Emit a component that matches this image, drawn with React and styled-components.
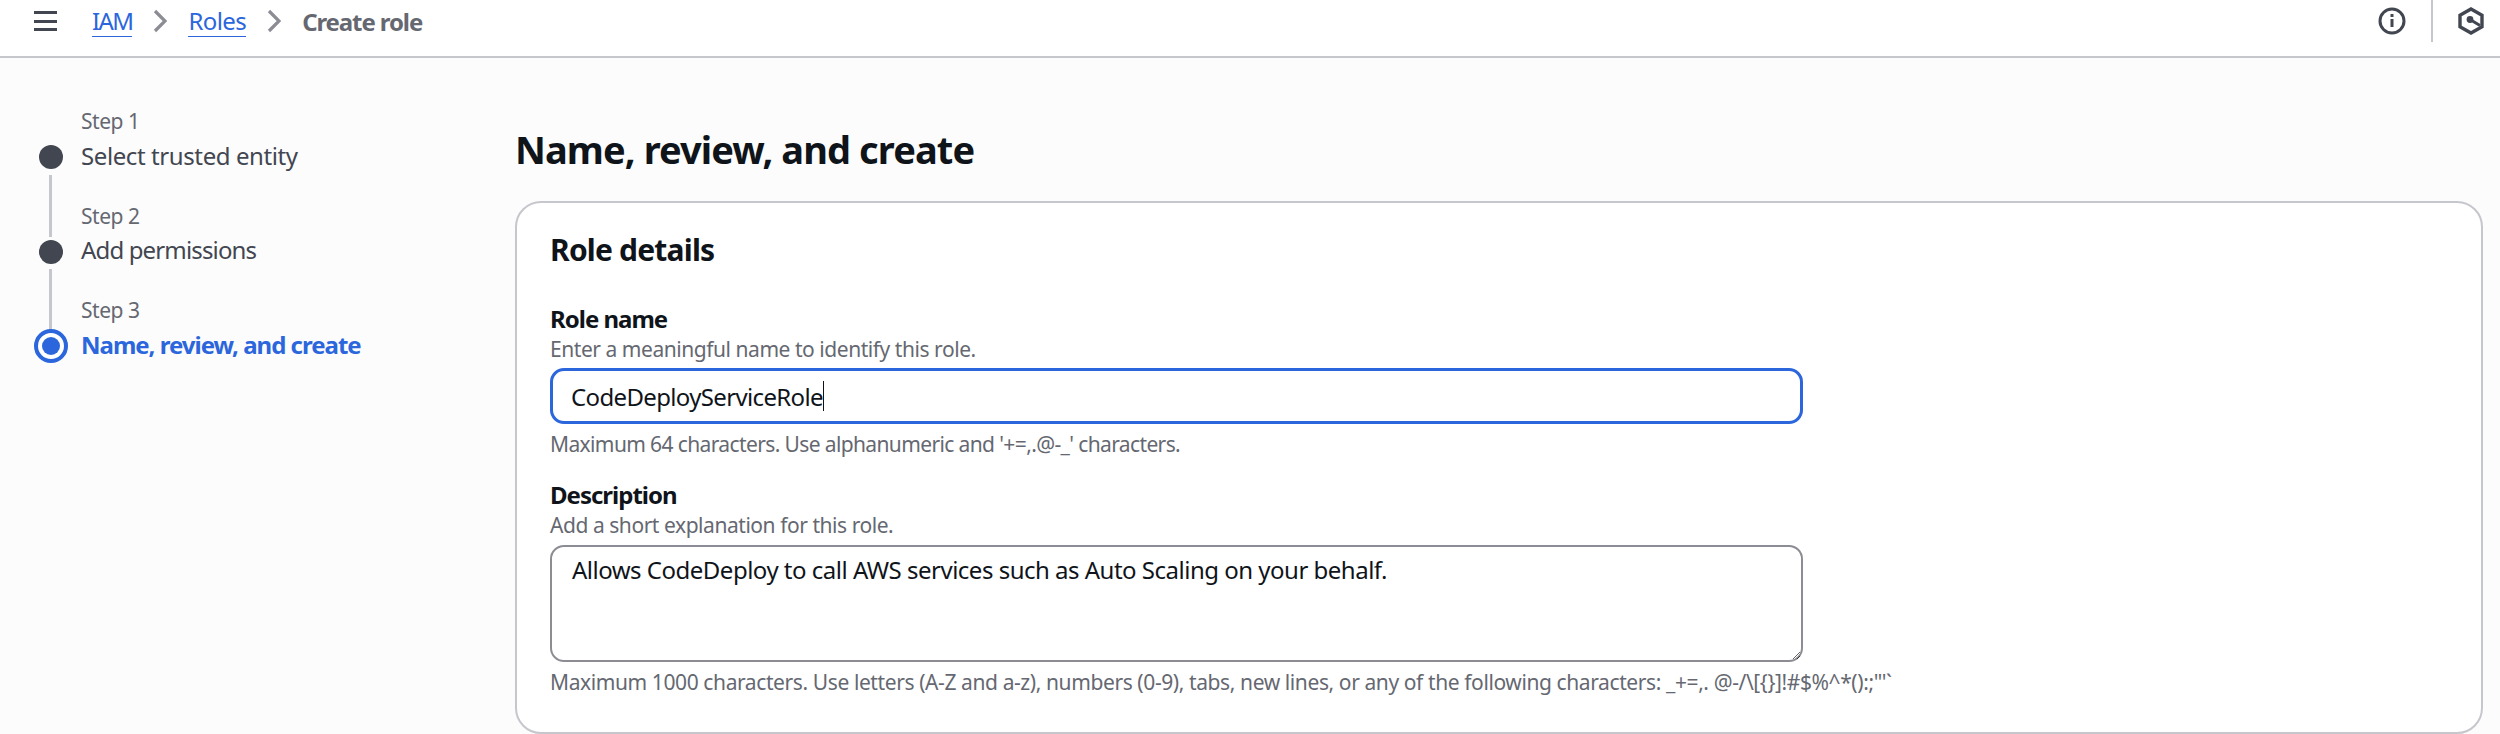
import React from 'react';
import styled, { createGlobalStyle } from 'styled-components';

const GlobalStyle = createGlobalStyle`
  html, body {
    margin: 0;
    padding: 0;
    background: #fcfcfc;
  }
  body {
    font-family: "Noto Sans", "Open Sans", sans-serif;
    color: #0f141a;
  }
`;

const Page = styled.div`
  width: 2500px;
  height: 734px;
  overflow: hidden;
`;

const TopBar = styled.header`
  height: 56px;
  background: #fff;
  border-bottom: 2px solid #c6c6cd;
  display: flex;
  align-items: flex-start;
`;

const MenuButton = styled.div`
  margin: 11px 35px 0 34px;
  width: 23px;
  height: 20px;
  display: flex;
  flex-direction: column;
  justify-content: space-between;
  span {
    height: 3px;
    background: #424650;
  }
`;

const Crumbs = styled.nav`
  display: flex;
  align-items: center;
  height: 42px;
  font-size: 24px;
`;

const CrumbLink = styled.a`
  color: #2b66dc;
  line-height: 30px;
  letter-spacing: ${(p) => p.$spacing}px;
  border-bottom: 1.5px solid #2b66dc;
`;

const CrumbCurrent = styled.span`
  color: #656871;
  font-weight: 700;
  letter-spacing: -1.1px;
`;

const Chevron = styled.svg`
  width: 14px;
  height: 24px;
  margin: 0 21px;
`;

const TopActions = styled.div`
  margin-left: auto;
  display: flex;
  height: 42px;
  align-items: center;
`;

const InfoIcon = styled.svg`
  width: 28px;
  height: 28px;
  margin-right: 25px;
`;

const Divider = styled.div`
  width: 2px;
  height: 42px;
  background: #c6c6cd;
  margin-right: 25px;
`;

const HexIcon = styled.svg`
  width: 26px;
  height: 28px;
  margin-right: 16px;
`;

const Body = styled.div`
  display: flex;
`;

const SideNav = styled.ol`
  list-style: none;
  width: 515px;
  flex: none;
  margin: 0;
  padding: 22px 0 0 33px;
  box-sizing: border-box;
`;

const Step = styled.li`
  display: grid;
  grid-template-columns: 35px 1fr;
  column-gap: 13px;
  grid-template-rows: 60px 34.5px;
`;

const StepLine = styled.div`
  justify-self: center;
  width: 3px;
  background: ${(p) => (p.$hidden ? 'transparent' : '#c6c6cd')};
  margin-bottom: -2px;
`;

const StepLabel = styled.div`
  align-self: end;
  font-size: 21px;
  line-height: 28px;
  letter-spacing: -0.45px;
  color: #656871;
  padding-bottom: 5px;
`;

const Marker = styled.div`
  justify-self: center;
  align-self: center;
  box-sizing: border-box;
  border-radius: 50%;
  width: ${(p) => (p.$active ? '34px' : '24px')};
  height: ${(p) => (p.$active ? '34px' : '24px')};
  background: ${(p) => (p.$active ? '#fff' : '#424650')};
  border: ${(p) => (p.$active ? '4px solid #2b66dc' : 'none')};
  display: flex;
  align-items: center;
  justify-content: center;
  &::after {
    content: '';
    display: ${(p) => (p.$active ? 'block' : 'none')};
    width: 18px;
    height: 18px;
    border-radius: 50%;
    background: #2b66dc;
  }
`;

const StepTitle = styled.div`
  align-self: center;
  font-size: 24px;
  line-height: 32px;
  margin-top: -3px;
  letter-spacing: ${(p) => p.$spacing}px;
  color: ${(p) => (p.$active ? '#2b66dc' : '#424650')};
  font-weight: ${(p) => (p.$active ? 700 : 400)};
`;

const Main = styled.main`
  flex: 1;
  padding-right: 17px;
`;

const PageTitle = styled.h1`
  margin: 0;
  padding-top: 65px;
  font-size: 38px;
  line-height: 52px;
  font-weight: 700;
  letter-spacing: -0.9px;
  color: #0f141a;
`;

const Card = styled.section`
  margin-top: 26px;
  box-sizing: border-box;
  height: 533px;
  background: #fff;
  border: 2px solid #c6c6cd;
  border-radius: 26px;
  padding: 29px 33px;
`;

const CardTitle = styled.h2`
  margin: 0;
  font-size: 30px;
  line-height: 36px;
  font-weight: 700;
  letter-spacing: -0.8px;
`;

const Field = styled.div`
  width: 1253px;
  margin-top: ${(p) => p.$top}px;
`;

const Label = styled.div`
  font-size: 24px;
  line-height: 32px;
  font-weight: 700;
  letter-spacing: -1px;
`;

const Hint = styled.div`
  font-size: 21px;
  line-height: 28px;
  letter-spacing: ${(p) => p.$spacing ?? -0.45}px;
  color: #656871;
  white-space: nowrap;
`;

const TextBox = styled.div`
  box-sizing: border-box;
  height: 56px;
  margin: 5px 0 6px;
  padding: 0 18px;
  border: 3.5px solid #2b66dc;
  border-radius: 14px;
  background: #fff;
  font-size: 24px;
  letter-spacing: -0.65px;
  display: flex;
  align-items: center;
`;

const Caret = styled.span`
  width: 1.5px;
  height: 30px;
  background: #0f141a;
`;

const TextArea = styled.textarea`
  display: block;
  width: 100%;
  height: 117px;
  margin: 6px 0;
  box-sizing: border-box;
  padding: 7px 20px;
  border: 2px solid #8c8c94;
  border-radius: 14px;
  background: #fff;
  color: #0f141a;
  font-family: inherit;
  font-size: 24px;
  line-height: 32px;
  letter-spacing: -0.5px;
  outline: none;
`;

const steps = [
  { label: 'Step 1', title: 'Select trusted entity', spacing: -0.4 },
  { label: 'Step 2', title: 'Add permissions', spacing: -0.85 },
  { label: 'Step 3', title: 'Name, review, and create', spacing: -1, active: true },
];

function ChevronIcon() {
  return (
    <Chevron viewBox="0 0 14 24" fill="none" stroke="#8c8c94" strokeWidth="3.2">
      <path d="M2 2l10 10L2 22" />
    </Chevron>
  );
}

export default function App() {
  return (
    <Page>
      <GlobalStyle />
      <TopBar>
        <MenuButton>
          <span />
          <span />
          <span />
        </MenuButton>
        <Crumbs>
          <CrumbLink $spacing={-1.6}>IAM</CrumbLink>
          <ChevronIcon />
          <CrumbLink $spacing={-0.6}>Roles</CrumbLink>
          <ChevronIcon />
          <CrumbCurrent>Create role</CrumbCurrent>
        </Crumbs>
        <TopActions>
          <InfoIcon viewBox="0 0 28 28" fill="none" stroke="#424650" strokeWidth="3">
            <circle cx="14" cy="14" r="12" />
            <path d="M14 12v8" />
            <path d="M14 7v3" />
          </InfoIcon>
          <Divider />
          <HexIcon viewBox="0 0 26 28" fill="none" stroke="#424650" strokeWidth="3.4">
            <path d="M13 2l11 6.2v11.6L13 26 2 19.8V8.2z" />
            <circle cx="12" cy="12.5" r="3.4" fill="#424650" stroke="none" />
            <path d="M12 12.5l10 6" strokeWidth="3" />
          </HexIcon>
        </TopActions>
      </TopBar>
      <Body>
        <SideNav>
          {steps.map((s, i) => (
            <Step key={s.label}>
              <StepLine $hidden={i === 0} />
              <StepLabel>{s.label}</StepLabel>
              <Marker $active={s.active} />
              <StepTitle $active={s.active} $spacing={s.spacing}>{s.title}</StepTitle>
            </Step>
          ))}
        </SideNav>
        <Main>
          <PageTitle>Name, review, and create</PageTitle>
          <Card>
            <CardTitle>Role details</CardTitle>
            <Field $top={35}>
              <Label>Role name</Label>
              <Hint>Enter a meaningful name to identify this role.</Hint>
              <TextBox>
                CodeDeployServiceRole
                <Caret />
              </TextBox>
              <Hint $spacing={-0.62}>Maximum 64 characters. Use alphanumeric and '+=,.@-_' characters.</Hint>
            </Field>
            <Field $top={21}>
              <Label>Description</Label>
              <Hint>Add a short explanation for this role.</Hint>
              <TextArea
                readOnly
                defaultValue="Allows CodeDeploy to call AWS services such as Auto Scaling on your behalf."
              />
              <Hint $spacing={-0.4}>
                Maximum 1000 characters. Use letters (A-Z and a-z), numbers (0-9), tabs, new lines, or any of the following characters: _+=,. @-/\[{'{}'}]!#$%^*():;"'`
              </Hint>
            </Field>
          </Card>
        </Main>
      </Body>
    </Page>
  );
}
